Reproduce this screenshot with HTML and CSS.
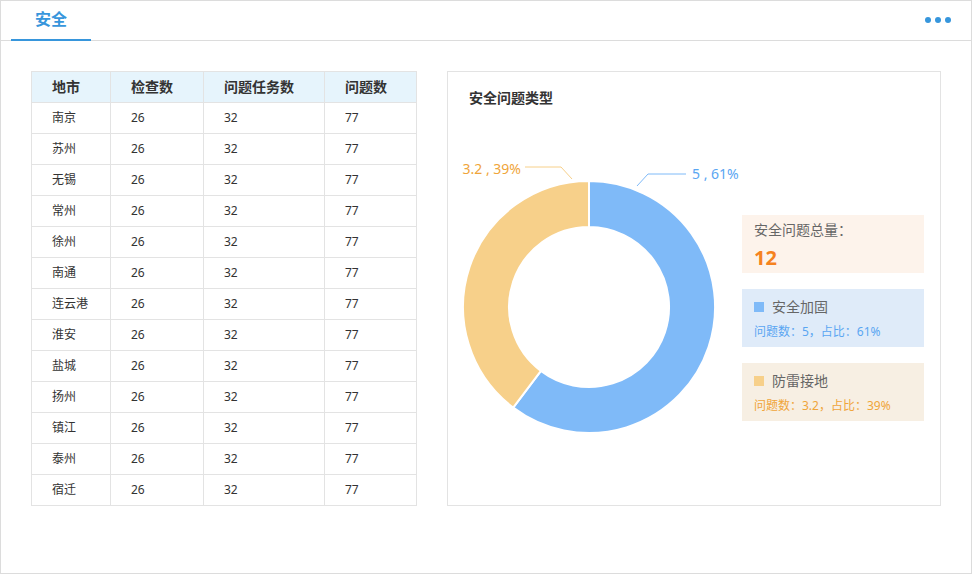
FILE: index.html
```html
<!DOCTYPE html>
<html lang="zh">
<head>
<meta charset="utf-8">
<title>安全</title>
<link rel="stylesheet" href="styles.css">
</head>
<body>
<div class="frame">
  <div class="header">
    <div class="tab">安全</div>
    <div class="more"><span></span><span></span><span></span></div>
  </div>
  <div class="content">
    <table class="grid">
      <thead>
        <tr><th class="c1">地市</th><th class="c2">检查数</th><th class="c3">问题任务数</th><th class="c4">问题数</th></tr>
      </thead>
      <tbody>
        <tr><td>南京</td><td>26</td><td>32</td><td>77</td></tr>
        <tr><td>苏州</td><td>26</td><td>32</td><td>77</td></tr>
        <tr><td>无锡</td><td>26</td><td>32</td><td>77</td></tr>
        <tr><td>常州</td><td>26</td><td>32</td><td>77</td></tr>
        <tr><td>徐州</td><td>26</td><td>32</td><td>77</td></tr>
        <tr><td>南通</td><td>26</td><td>32</td><td>77</td></tr>
        <tr><td>连云港</td><td>26</td><td>32</td><td>77</td></tr>
        <tr><td>淮安</td><td>26</td><td>32</td><td>77</td></tr>
        <tr><td>盐城</td><td>26</td><td>32</td><td>77</td></tr>
        <tr><td>扬州</td><td>26</td><td>32</td><td>77</td></tr>
        <tr><td>镇江</td><td>26</td><td>32</td><td>77</td></tr>
        <tr><td>泰州</td><td>26</td><td>32</td><td>77</td></tr>
        <tr><td>宿迁</td><td>26</td><td>32</td><td>77</td></tr>
      </tbody>
    </table>
    <div class="panel">
      <div class="panel-title">安全问题类型</div>
      <div class="panel-body">
        <svg class="donut" width="294" height="340" viewBox="0 0 294 340">
          <path d="M141,73 A126,126 0 1 1 65.2,299.6 L92.9,262.9 A80,80 0 1 0 141,119 Z" fill="#7fbaf8" stroke="#fff" stroke-width="2"/>
          <path d="M65.2,299.6 A126,126 0 0 1 141,73 L141,119 A80,80 0 0 0 92.9,262.9 Z" fill="#f7d08a" stroke="#fff" stroke-width="2"/>
          <polyline points="189,78 200,66 238,66" fill="none" stroke="#7fbaf8" stroke-width="1"/>
          <polyline points="77,59 113,59 124,71" fill="none" stroke="#f7d08a" stroke-width="1"/>
          <text x="244" y="71" class="lbl lbl-blue">5 , 61%</text>
          <text x="73" y="66" text-anchor="end" class="lbl lbl-yellow">3.2 , 39%</text>
        </svg>
        <div class="legend">
          <div class="box total">
            <div class="total-label">安全问题总量：</div>
            <div class="total-num">12</div>
          </div>
          <div class="box blue">
            <div class="item-name"><i class="sq"></i>安全加固</div>
            <div class="item-sub">问题数：5，占比：61%</div>
          </div>
          <div class="box yellow">
            <div class="item-name"><i class="sq"></i>防雷接地</div>
            <div class="item-sub">问题数：3.2，占比：39%</div>
          </div>
        </div>
      </div>
    </div>
  </div>
</div>
</body>
</html>
```
FILE: styles.css
```css
* { box-sizing: border-box; }
html, body { margin: 0; padding: 0; background: #fff; }
body {
  font-family: "Noto Sans", "Noto Sans CJK SC", sans-serif;
  color: #333;
}
.frame {
  width: 972px;
  height: 574px;
  border: 1px solid #dcdcdc;
}
.header {
  height: 40px;
  border-bottom: 1px solid #dcdcdc;
  display: flex;
  justify-content: space-between;
  align-items: flex-start;
  padding: 0 20px 0 10px;
}
.tab {
  width: 80px;
  height: 40px;
  border-bottom: 2px solid #3796dc;
  text-align: center;
  font-size: 16px;
  font-weight: 700;
  line-height: 37px;
  color: #3796dc;
}
.more {
  display: flex;
  gap: 4px;
  margin-top: 16px;
}
.more span {
  width: 6px;
  height: 6px;
  border-radius: 50%;
  background: #3796dc;
}
.content {
  display: flex;
  gap: 30px;
  padding: 30px 30px 0 30px;
}
.grid {
  border-collapse: separate;
  border-spacing: 0;
  table-layout: fixed;
  width: 386px;
  border-top: 1px solid #e3e3e3;
  border-left: 1px solid #e3e3e3;
  font-size: 12px;
}
.grid th, .grid td {
  border-right: 1px solid #e3e3e3;
  border-bottom: 1px solid #e3e3e3;
  height: 30px;
  padding: 0 0 0 20px;
  line-height: 30px;
  text-align: left;
  white-space: nowrap;
  color: #333;
}
.grid th {
  background: #e6f4fc;
  font-size: 14px;
  font-weight: 700;
}
.grid .c1 { width: 79px; }
.grid .c2 { width: 93px; }
.grid .c3 { width: 121px; }
.grid .c4 { width: 92px; }
.panel {
  width: 494px;
  height: 435px;
  border: 1px solid #e3e3e3;
}
.panel-title {
  padding: 16px 0 0 21px;
  font-size: 14px;
  font-weight: 700;
  line-height: 20px;
  color: #333;
}
.panel-body {
  display: flex;
  align-items: flex-start;
}
.donut { display: block; flex: none; }
.lbl { font-size: 14px; font-family: "Noto Sans", "Noto Sans CJK SC", sans-serif; }
.lbl-blue { fill: #5aa6f2; }
.lbl-yellow { fill: #f0a53a; }
.legend {
  width: 182px;
  margin-top: 107px;
  display: flex;
  flex-direction: column;
  gap: 16px;
}
.box {
  height: 58px;
  padding: 5px 12px 0 12px;
}
.total { background: #fdf3eb; }
.blue { background: #dfebf9; padding-top: 8px; }
.yellow { background: #f7efe3; padding-top: 8px; }
.total-label {
  font-size: 14px;
  line-height: 20px;
  color: #666;
}
.total-num {
  margin-top: 6px;
  font-size: 20px;
  font-weight: 700;
  line-height: 24px;
  color: #f5821f;
}
.item-name {
  display: flex;
  align-items: center;
  font-size: 14px;
  line-height: 20px;
  color: #666;
}
.sq {
  width: 10px;
  height: 10px;
  margin-right: 8px;
}
.blue .sq { background: #7fbaf8; }
.yellow .sq { background: #f7d08a; }
.item-sub {
  margin-top: 5px;
  font-size: 12px;
  line-height: 20px;
}
.blue .item-sub { color: #5aa6f2; }
.yellow .item-sub { color: #f0a53a; }
```
